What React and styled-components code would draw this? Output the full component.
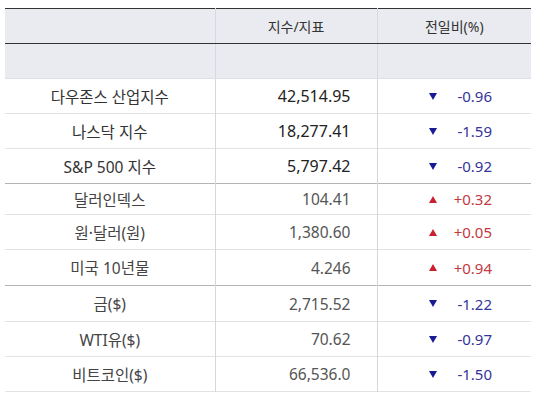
import React from 'react'
import styled, { createGlobalStyle } from 'styled-components'

const GlobalStyle = createGlobalStyle`
  body {
    margin: 0;
    background: #fff;
    font-family: "Noto Sans", "Noto Sans CJK KR", sans-serif;
  }
`

const headerBg = '#e9ebf0'

const Wrap = styled.div`
  padding: 8px 9px 0 5px;
`

const Table = styled.table`
  width: 526px;
  border-collapse: collapse;
  table-layout: fixed;
  border-top: 1px solid #333;
`

const HeadCell = styled.th`
  height: 34px;
  padding: 0;
  background: ${headerBg};
  font-weight: normal;
  font-size: 14px;
  color: #333;
  text-align: center;
  border-bottom: ${p => (p.$dark ? '1px solid #333' : '1px solid #dcdfe5')};
  border-left: ${p => (p.$first ? 'none' : '1px solid #d6d9df')};
`

const Row = styled.tr`
  height: ${p => p.$h}px;
  border-bottom: 1px solid ${p => (p.$end ? '#b4b4b4' : '#e2e2e2')};
`

const Label = styled.td`
  padding: 0;
  text-align: center;
  font-size: 15.5px;
  color: ${p => (p.$main ? '#333' : '#444')};
`

const Value = styled.td`
  padding: 0 26px 0 0;
  text-align: right;
  font-size: ${p => (p.$main ? 16 : 15.5)}px;
  color: ${p => (p.$main ? '#222' : '#555')};
  border-left: 1px solid #d6d6d6;
`

const ChangeCell = styled.td`
  padding: 0 39px 0 51px;
  border-left: 1px solid #d6d6d6;
`

const Change = styled.div`
  display: flex;
  align-items: center;
  justify-content: space-between;
  font-size: 15px;
  color: ${p => (p.$up ? '#c23a3f' : '#34349a')};
`

const Triangle = styled.span`
  width: 0;
  height: 0;
  border-left: 4px solid transparent;
  border-right: 4px solid transparent;
  ${p =>
    p.$up
      ? 'border-bottom: 7px solid #c8202c;'
      : 'border-top: 7px solid #1a1a96;'}
`

const rows = [
  { name: '다우존스 산업지수', value: '42,514.95', change: '-0.96', main: true },
  { name: '나스닥 지수', value: '18,277.41', change: '-1.59', main: true },
  { name: 'S&P 500 지수', value: '5,797.42', change: '-0.92', main: true, end: true },
  { name: '달러인덱스', value: '104.41', change: '+0.32', h: 31 },
  { name: '원·달러(원)', value: '1,380.60', change: '+0.05' },
  { name: '미국 10년물', value: '4.246', change: '+0.94', end: true, h: 36 },
  { name: '금($)', value: '2,715.52', change: '-1.22', h: 36 },
  { name: 'WTI유($)', value: '70.62', change: '-0.97' },
  { name: '비트코인($)', value: '66,536.0', change: '-1.50' },
]

const App = () => {
  return (
    <Wrap>
      <GlobalStyle />
      <Table>
        <colgroup>
          <col style={{ width: 210 }} />
          <col style={{ width: 162 }} />
          <col style={{ width: 154 }} />
        </colgroup>
        <thead>
          <tr>
            <HeadCell $first $dark />
            <HeadCell $dark>지수/지표</HeadCell>
            <HeadCell $dark>전일비(%)</HeadCell>
          </tr>
          <tr>
            <HeadCell $first />
            <HeadCell />
            <HeadCell />
          </tr>
        </thead>
        <tbody>
          {rows.map(r => {
            const up = r.change.startsWith('+')
            return (
              <Row key={r.name} $h={r.h || 35} $end={r.end}>
                <Label $main={r.main}>{r.name}</Label>
                <Value $main={r.main}>{r.value}</Value>
                <ChangeCell>
                  <Change $up={up}>
                    <Triangle $up={up} />
                    <span>{r.change}</span>
                  </Change>
                </ChangeCell>
              </Row>
            )
          })}
        </tbody>
      </Table>
    </Wrap>
  )
}

export default App
